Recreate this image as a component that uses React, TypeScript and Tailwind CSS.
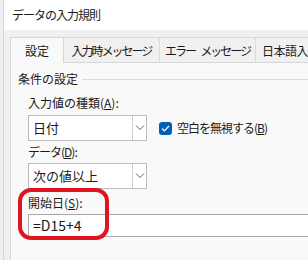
import React from 'react';

function Chevron() {
  return (
    <svg width="10" height="6" viewBox="0 0 10 6" fill="none" stroke="#606060" strokeWidth="1">
      <path d="M1 0.5l4 4 4-4" />
    </svg>
  );
}

function Select({ value }: { value: string }) {
  return (
    <div className="flex h-[26px] w-[119px] shrink-0 items-stretch border border-[#bdbdbd] bg-white">
      <div className="flex flex-1 items-center pl-[4px] text-[13px] text-[#1a1a1a]">{value}</div>
      <div className="flex w-[14px] items-center justify-center border-l border-[#d0d0d0]">
        <Chevron />
      </div>
    </div>
  );
}

export default function App() {
  return (
    <div
      className="relative h-[260px] w-[308px] overflow-hidden bg-[#efefef] pl-[3px]"
      style={{ fontFamily: '"Noto Sans CJK JP", "Noto Sans", sans-serif' }}
    >
      <div className="flex h-full flex-col border-l border-[#d4d4d4]">
        {/* Title bar */}
        <div className="flex h-[30px] items-center bg-white pl-[8px] text-[12px] tracking-[-1px] text-[#1a1a1a]">
          データの入力規則
        </div>

        {/* Tabs */}
        <div className="flex h-[32px] items-end whitespace-nowrap bg-[#f0f0f0] pl-[6px] text-[12px] text-[#1a1a1a]">
          <div className="relative -mb-px flex h-[26px] w-[54px] shrink-0 items-center justify-center border border-b-0 border-[#d6d6d6] bg-[#f9f9f9] pt-[1px]">
            設定
          </div>
          <div className="flex h-[25px] w-[96px] shrink-0 items-center justify-center border-r border-t border-[#dadada] pt-[1px] tracking-[-2px]">
            入力時メッセージ
          </div>
          <div className="flex h-[25px] w-[96px] shrink-0 items-center justify-center border-r border-t border-[#dadada] pt-[1px] tracking-[-2px]">
            <span>エラー</span>
            <span className="ml-[5px]">メッセージ</span>
          </div>
          <div className="flex h-[25px] shrink-0 items-center border-t border-[#dadada] pl-[6px] pt-[1px] tracking-[-0.5px]">
            日本語入力
          </div>
        </div>

        {/* Panel */}
        <div className="ml-[6px] flex flex-1 flex-col border-l border-t border-[#d6d6d6] bg-[#f9f9f9] pl-[7px] text-[12px] text-[#1a1a1a]">
          <div className="mt-[8px] flex h-[16px] items-center gap-[4px]">
            <span>条件の設定</span>
            <div className="h-px flex-1 bg-[#dcdcdc]" />
          </div>

          <div className="ml-[10px] mt-[8px] flex h-[16px] items-center">
            入力値の種類(<span className="underline">A</span>):
          </div>
          <div className="ml-[10px] mt-[4px] flex items-center">
            <Select value="日付" />
            <div className="ml-[12px] flex shrink-0 items-center">
              <div className="flex h-[13px] w-[13px] items-center justify-center rounded-[3px] bg-[#005fb8]">
                <svg width="9" height="7" viewBox="0 0 9 7" fill="none" stroke="white" strokeWidth="1.2">
                  <path d="M1 3.5l2.3 2.3L8 1" />
                </svg>
              </div>
              <span className="ml-[5px] whitespace-nowrap tracking-[-1px]">
                空白を無視する(<span className="underline">B</span>)
              </span>
            </div>
          </div>

          <div className="ml-[10px] mt-[2px] flex h-[18px] items-center tracking-[-1px]">
            データ(<span className="underline">D</span>):
          </div>
          <div className="ml-[10px] mt-[2px]">
            <Select value="次の値以上" />
          </div>

          <div className="ml-[10px] mt-[5px] flex h-[18px] items-center">
            開始日(<span className="underline">S</span>):
          </div>
          <div className="ml-[10px] mt-[2px] flex h-[23px] items-center border-y border-l border-[#a8a8a8] bg-white pl-[4px] pb-[1px] text-[14px]">
            =D15+4
          </div>
        </div>
      </div>

      {/* red annotation */}
      <div className="absolute left-[18px] top-[188px] h-[52px] w-[91px] rounded-[13px] border-[4px] border-[#e0141e]" />
    </div>
  );
}
